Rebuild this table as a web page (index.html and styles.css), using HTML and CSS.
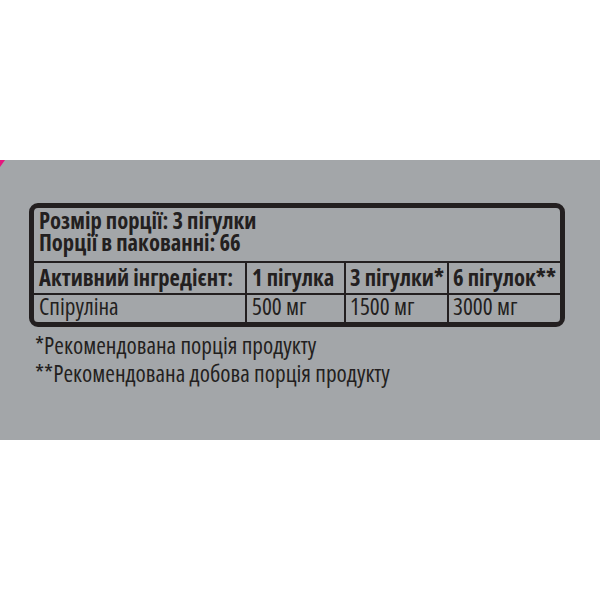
FILE: index.html
```html
<!DOCTYPE html>
<html lang="uk">
<head>
<meta charset="utf-8">
<link rel="stylesheet" href="styles.css">
</head>
<body>
<div class="top"></div>
<section class="band">
  <div class="corner"></div>
  <div class="label">
    <div class="head">
      <div>Розмір порції: 3 пігулки</div>
      <div>Порції в пакованні: 66</div>
    </div>
    <div class="table">
      <div class="cell b">Активний інгредієнт:</div>
      <div class="cell b">1 пігулка</div>
      <div class="cell b n">3 пігулки*</div>
      <div class="cell b n">6 пігулок**</div>
      <div class="cell r">Спіруліна</div>
      <div class="cell r">500 мг</div>
      <div class="cell r n">1500 мг</div>
      <div class="cell r n">3000 мг</div>
    </div>
  </div>
  <div class="notes">
    <div>*Рекомендована порція продукту</div>
    <div>**Рекомендована добова порція продукту</div>
  </div>
</section>
</body>
</html>
```
FILE: styles.css
```css
html, body {
  margin: 0;
  padding: 0;
  background: #ffffff;
}
body {
  font-family: "Open Sans", "DejaVu Sans", sans-serif;
  font-stretch: 75%;
  color: #231f20;
}
.top {
  height: 160px;
}
.band {
  position: relative;
  height: 280px;
  background: #a3a6a9;
  padding-top: 43px;
  box-sizing: border-box;
}
.corner {
  position: absolute;
  left: 0;
  top: 0;
  width: 5px;
  height: 7px;
  background: #e5177e;
  clip-path: polygon(0 0, 100% 0, 0 100%);
}
.label {
  margin-left: 29px;
  width: 536px;
  box-sizing: border-box;
  border: 5px solid #231f20;
  border-radius: 9px;
  overflow: hidden;
}
.head {
  font-size: 22.6px;
  font-weight: 700;
  line-height: 22px;
  padding: 2.3px 0 6.7px 5px;
  white-space: nowrap;
}
.table {
  display: grid;
  grid-template-columns: 211px 97px 101px 111px;
  grid-template-rows: 30px 27px;
  column-gap: 2px;
  row-gap: 2px;
  padding-top: 2px;
  background: #231f20;
}
.cell {
  background: #a3a6a9;
  white-space: nowrap;
  padding-left: 5px;
}
.cell.n {
  padding-left: 4px;
}
.cell.b {
  font-size: 22.6px;
  font-weight: 700;
  line-height: 30px;
}
.cell.r {
  font-size: 23.3px;
  font-weight: 400;
  line-height: 22px;
  padding-bottom: 5px;
}
.notes {
  margin-top: 4px;
  margin-left: 35px;
  font-size: 23.3px;
  line-height: 28px;
  font-weight: 400;
  white-space: nowrap;
}
```
